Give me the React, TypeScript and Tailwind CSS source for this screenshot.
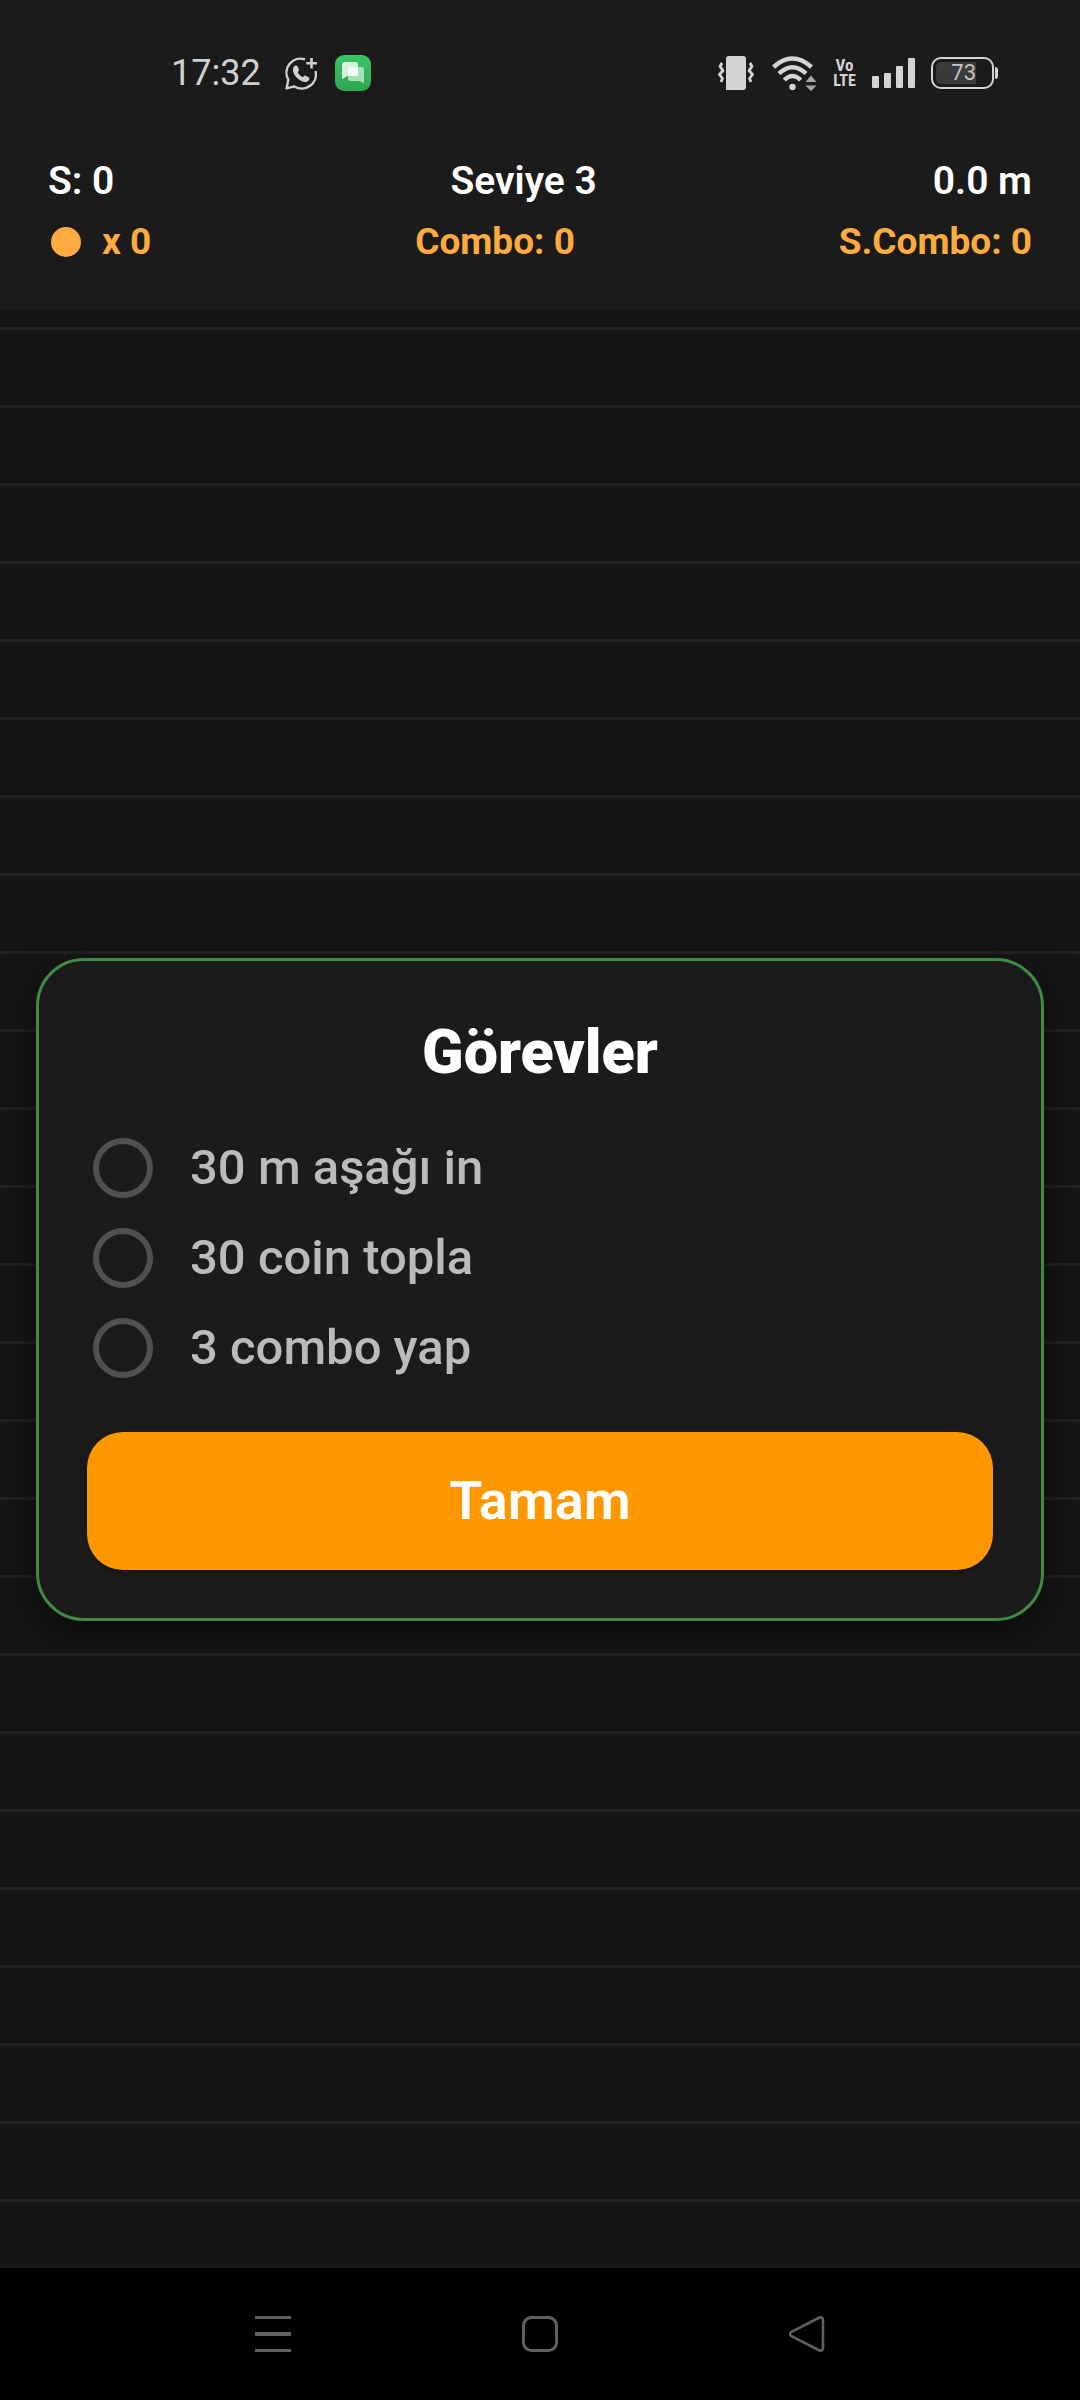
import { useState } from "react";

const TASKS = [
  { id: "depth", label: "30 m aşağı in" },
  { id: "coins", label: "30 coin topla" },
  { id: "combo", label: "3 combo yap" },
];

function WhatsAppPlusIcon() {
  return (
    <svg width="32" height="33" viewBox="0 0 32 33" fill="none" aria-hidden="true">
      <path
        d="M20 2.4A14 14 0 0 0 3.3 22.6L1.6 31.4L9.4 29.4A14.1 14.1 0 0 0 30.5 14"
        stroke="#d0d0d0"
        strokeWidth="2.4"
        strokeLinejoin="round"
      />
      <path d="M26.5 1v10.5M21.2 6.2h10.6" stroke="#d0d0d0" strokeWidth="2.6" />
      <path
        d="M9 9.6c1-1.5 3-1.3 3.6-.1l1.3 3c.4 1-.2 1.7-1.1 2.7 1.2 2.4 2.9 4 5.2 5 1-1.1 1.5-1.9 2.5-1.5l3 1.5c1.2.6 1 2.2.1 3.2-1.7 1.9-4.3 1.9-7.3.5-3.9-1.8-6.7-4.9-7.9-8.4-.8-2.3-.5-4.5.6-5.9Z"
        fill="#d0d0d0"
      />
    </svg>
  );
}

function MessagesIcon() {
  return (
    <svg width="36" height="36" viewBox="0 0 36 36" aria-hidden="true">
      <defs>
        <linearGradient id="msg-bg" x1="0" y1="0" x2="0" y2="1">
          <stop offset="0" stopColor="#3cc366" />
          <stop offset="1" stopColor="#2ea650" />
        </linearGradient>
      </defs>
      <rect width="36" height="36" rx="9" fill="url(#msg-bg)" />
      <path d="M15 12h12a2 2 0 0 1 2 2v14.500l-4-2.500H15a2 2 0 0 1-2-2v-10a2 2 0 0 1 2-2Z" fill="#a5e0b6" />
      <path d="M9 7h12a2 2 0 0 1 2 2v10a2 2 0 0 1-2 2H12l-5 3.500V9a2 2 0 0 1 2-2Z" fill="#d5f2dd" />
      <path d="M15 12h8v7a2 2 0 0 1-2 2h-8v-7a2 2 0 0 1 2-2Z" fill="#f0fbf3" />
    </svg>
  );
}

function VibrateIcon() {
  return (
    <svg width="36" height="34" viewBox="0 0 36 34" fill="none" aria-hidden="true">
      <path d="M11 0h14q3 0 3 3v28q0 3-3 3H8V3q0-3 3-3Z" fill="#d4d4d4" />
      <path
        d="M4 7L2 10.500l3 4-3.500 4 3 4-1.500 3.500M32 7l2 3.500-3 4 3.500 4-3 4 1.500 3.500"
        stroke="#d4d4d4"
        strokeWidth="2.800"
        strokeLinejoin="round"
      />
    </svg>
  );
}

function WifiIcon() {
  return (
    <svg width="45" height="35" viewBox="0 0 45 35" fill="none" aria-hidden="true">
      <g stroke="#d4d4d4" strokeWidth="4.400">
        <path d="M1.500 11Q20.500-6 39.500 11" />
        <path d="M7 17.500Q20.500 5 34 17.500" />
        <path d="M12.300 24Q20.500 16 28.700 24" />
      </g>
      <circle cx="20.500" cy="31" r="3.200" fill="#d4d4d4" />
      <path d="M39 19.500l5.500 6.500h-11zM39 35l5.500-5.500h-11z" fill="#a8a8a8" />
    </svg>
  );
}

function SignalIcon() {
  return (
    <svg width="43" height="30" viewBox="0 0 43 30" fill="#d4d4d4" aria-hidden="true">
      <rect x="0" y="18" width="7" height="12" rx="1" />
      <rect x="12" y="15" width="7" height="15" rx="1" />
      <rect x="24" y="8" width="7" height="22" rx="1" />
      <rect x="36" y="0" width="7" height="30" rx="1" />
    </svg>
  );
}

function StatusBar() {
  return (
    <div className="flex h-[146px] items-center justify-between pr-[82px] pl-[171px] text-[#d0d0d0]">
      <div className="flex items-center">
        <span className="text-4xl leading-10">17:32</span>
        <span className="ml-6">
          <WhatsAppPlusIcon />
        </span>
        <span className="ml-[18px]">
          <MessagesIcon />
        </span>
      </div>
      <div className="flex items-center">
        <VibrateIcon />
        <span className="ml-[18px]">
          <WifiIcon />
        </span>
        <span className="ml-4 flex w-[23px] flex-col items-center font-['Liberation_Sans_Narrow','Roboto_Condensed',Roboto,sans-serif] text-[17px] leading-4 font-bold text-[#d4d4d4]">
          <span>Vo</span>
          <span className="text-base leading-4">LTE</span>
        </span>
        <span className="ml-4">
          <SignalIcon />
        </span>
        <span className="ml-4 flex items-center gap-px">
          <span className="flex h-8 w-[63px] rounded-[10px] border-2 border-[#d4d4d4] p-[3px]">
            <span className="flex w-10 items-center justify-end rounded-l-[5px] bg-[#3a3a3a] text-[22px] leading-5 text-[#c4c4c4]">
              73
            </span>
          </span>
          <span className="h-3 w-[3px] rounded-r-sm bg-[#d4d4d4]" />
        </span>
      </div>
    </div>
  );
}

function ScoreHeader() {
  return (
    <div className="px-12 pb-[42px]">
      <div className="flex items-center justify-between text-[39px] leading-[70px] font-semibold text-white">
        <span>S: 0</span>
        <span>Seviye 3</span>
        <span>0.0 m</span>
      </div>
      <div className="flex items-center justify-between text-[37px] leading-[52px] font-bold text-[#ffab40]">
        <span className="flex items-center gap-[18px]">
          <span className="flex size-9 items-center justify-center">
            <span className="size-[30px] rounded-full bg-[#ffab40]" />
          </span>
          x 0
        </span>
        <span>Combo: 0</span>
        <span>S.Combo: 0</span>
      </div>
    </div>
  );
}

function TaskDialog() {
  const [done, setDone] = useState<Record<string, boolean>>({});
  return (
    <section
      role="dialog"
      aria-labelledby="tasks-title"
      className="w-full rounded-[48px] border-3 border-[#408a44] bg-[#1b1b1b] p-12 shadow-[0_12px_36px_rgba(0,0,0,0.55)]"
    >
      <h1 id="tasks-title" className="text-center text-[61px] leading-[86px] font-black text-white">
        Görevler
      </h1>
      <ul className="mt-7">
        {TASKS.map((task) => (
          <li key={task.id}>
            <label className="flex h-[90px] items-center pl-1.5 text-[49px] leading-[60px] font-medium text-[#bbbbbb]">
              <input
                type="checkbox"
                checked={!!done[task.id]}
                onChange={(e) => setDone({ ...done, [task.id]: e.target.checked })}
                className="mr-[37px] size-[60px] appearance-none rounded-full border-6 border-[#505050] checked:bg-[#408a44]"
              />
              {task.label}
            </label>
          </li>
        ))}
      </ul>
      <button
        type="button"
        className="mt-[39px] h-[138px] w-full rounded-[36px] bg-[#ff9800] text-[54px] font-semibold text-white shadow-[0_3px_6px_rgba(0,0,0,0.2)]"
      >
        Tamam
      </button>
    </section>
  );
}

function NavigationBar() {
  return (
    <nav className="grid h-[132px] grid-cols-3 place-items-center bg-black px-[139px] text-[#606060]">
      <button type="button" aria-label="Son uygulamalar">
        <svg width="36" height="36" viewBox="0 0 36 36" fill="currentColor" className="block">
          <rect width="36" height="3" />
          <rect y="16" width="36" height="4" />
          <rect y="33" width="36" height="3" />
        </svg>
      </button>
      <button type="button" aria-label="Ana ekran">
        <svg width="36" height="36" viewBox="0 0 36 36" fill="none" className="block">
          <rect x="1.500" y="1.500" width="33" height="33" rx="8" stroke="currentColor" strokeWidth="3" />
        </svg>
      </button>
      <button type="button" aria-label="Geri">
        <svg width="36" height="36" viewBox="0 0 36 36" fill="none" className="block">
          <path
            d="M2.500 15.800L29.500 2Q34 0 34 4.500V31.500Q34 36 29.500 34L2.500 20.200Q-.5 18 2.500 15.800Z"
            stroke="currentColor"
            strokeWidth="2.600"
            strokeLinejoin="round"
          />
        </svg>
      </button>
    </nav>
  );
}

export default function App() {
  return (
    <div className="flex min-h-screen flex-col bg-[#161616] font-[Roboto,sans-serif]">
      <header className="bg-[#1b1b1b]">
        <StatusBar />
        <ScoreHeader />
      </header>
      <main className="flex flex-1 items-center bg-[linear-gradient(#222222_3px,transparent_3px)] bg-[length:100%_78px] bg-[position:0_17px] px-9">
        <TaskDialog />
      </main>
      <NavigationBar />
    </div>
  );
}
